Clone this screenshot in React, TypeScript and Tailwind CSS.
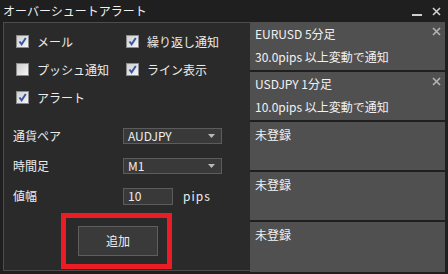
import React from 'react';

const font = "font-['Noto_Sans_CJK_JP','Noto_Sans',sans-serif]";

const CheckBox: React.FC<{ checked: boolean; label: string }> = ({ checked, label }) => (
  <div className="flex items-center h-[13px]">
    <div className="w-[13px] h-[13px] border border-[#8c8c8c] bg-linear-to-br from-[#cfcfcf] to-[#f6f6f6] flex items-center justify-center">
      {checked && (
        <svg width="11" height="11" viewBox="0 0 11 11">
          <path d="M2.5 5.5 L4.6 8.3 L8.8 2" fill="none" stroke="#3a55a8" strokeWidth="2" />
        </svg>
      )}
    </div>
    <span className="ml-[8px] text-[12px] leading-[13px] text-[#ececec] whitespace-nowrap">{label}</span>
  </div>
);

const Select: React.FC<{ value: string }> = ({ value }) => (
  <div className="w-[99px] h-[16px] border border-[#5c5c5c] bg-[#393939] flex items-center justify-between pl-[4px] pr-[6px]">
    <span className="text-[12px] leading-[14px] text-[#eeeeee]">{value}</span>
    <svg width="7" height="4" viewBox="0 0 7 4">
      <path d="M0 0 H7 L3.5 4 Z" fill="#b8b8b8" />
    </svg>
  </div>
);

const CloseIcon: React.FC<{ color: string }> = ({ color }) => (
  <svg width="9" height="9" viewBox="0 0 9 9">
    <path d="M1 1 L8 8 M8 1 L1 8" stroke={color} strokeWidth="1.6" />
  </svg>
);

const alerts = [
  { title: 'EURUSD 5分足', detail: '30.0pips 以上変動で通知' },
  { title: 'USDJPY 1分足', detail: '10.0pips 以上変動で通知' },
  null,
  null,
  null,
];

const App: React.FC = () => {
  return (
    <div className={`w-[448px] h-[274px] bg-[#1f1f1f] overflow-hidden ${font}`}>
      {/* Title bar */}
      <div className="h-[22px] flex items-center justify-between pl-[3px] pr-[7px]">
        <span className="text-[12px] leading-[14px] text-[#f0f0f0]">オーバーシュートアラート</span>
        <div className="flex items-center gap-[10px] pt-[1px]">
          <div className="w-[10px] h-[2px] bg-[#cfcfcf] mt-[6px]" />
          <CloseIcon color="#d0d0d0" />
        </div>
      </div>

      <div className="flex pl-[3px]">
        {/* Settings panel */}
        <div className="w-[247px] h-[249px] border-l border-t border-b border-[#4c4c4c] bg-[#2a2a2a] flex flex-col">
          <div className="grid grid-cols-[110px_auto] gap-y-[15px] pt-[12px] pl-[12px]">
            <CheckBox checked label="メール" />
            <CheckBox checked label="繰り返し通知" />
            <CheckBox checked={false} label="プッシュ通知" />
            <CheckBox checked label="ライン表示" />
            <CheckBox checked label="アラート" />
          </div>

          <div className="mt-[23px] pl-[9px] flex flex-col gap-[12px]">
            <div className="flex items-center">
              <span className="w-[110px] text-[12px] text-[#ececec]">通貨ペア</span>
              <Select value="AUDJPY" />
            </div>
            <div className="flex items-center">
              <span className="w-[110px] text-[12px] text-[#ececec]">時間足</span>
              <Select value="M1" />
            </div>
            <div className="flex items-center">
              <span className="w-[110px] text-[12px] text-[#ececec]">値幅</span>
              <div className="w-[50px] h-[17px] border border-[#5c5c5c] bg-[#393939] flex items-center pl-[4px]">
                <span className="text-[12px] leading-[14px] text-[#eeeeee]">10</span>
              </div>
              <span className="ml-[10px] text-[12px] tracking-[1px] text-[#ececec]">pips</span>
            </div>
          </div>

          <div className="mt-[8px] ml-[57px] w-[111px] h-[56px] border-[5px] border-[#ec1c24] pl-[12px] pt-[8px]">
            <div className="w-[80px] h-[30px] border border-[#5e5e5e] bg-[#3a3a3a] flex items-center justify-center">
              <span className="text-[12px] text-[#f0f0f0]">追加</span>
            </div>
          </div>
        </div>

        {/* Registered alerts */}
        <div className="w-[195px] flex flex-col gap-[2px]">
          {alerts.map((a, i) => (
            <div key={i} className={`relative bg-[#505050] px-[5px] ${i === 4 ? 'h-[50px]' : 'h-[48px]'}`}>
              {a ? (
                <>
                  <div className="text-[12px] leading-[23px] text-[#f2f2f2]">{a.title}</div>
                  <div className="text-[12px] leading-[23px] text-[#f2f2f2]">{a.detail}</div>
                  <div className="absolute right-[4px] top-[5px]">
                    <CloseIcon color="#b4b4b4" />
                  </div>
                </>
              ) : (
                <div className="text-[12px] leading-[26px] text-[#f2f2f2]">未登録</div>
              )}
            </div>
          ))}
        </div>
      </div>
    </div>
  );
};

export default App;
